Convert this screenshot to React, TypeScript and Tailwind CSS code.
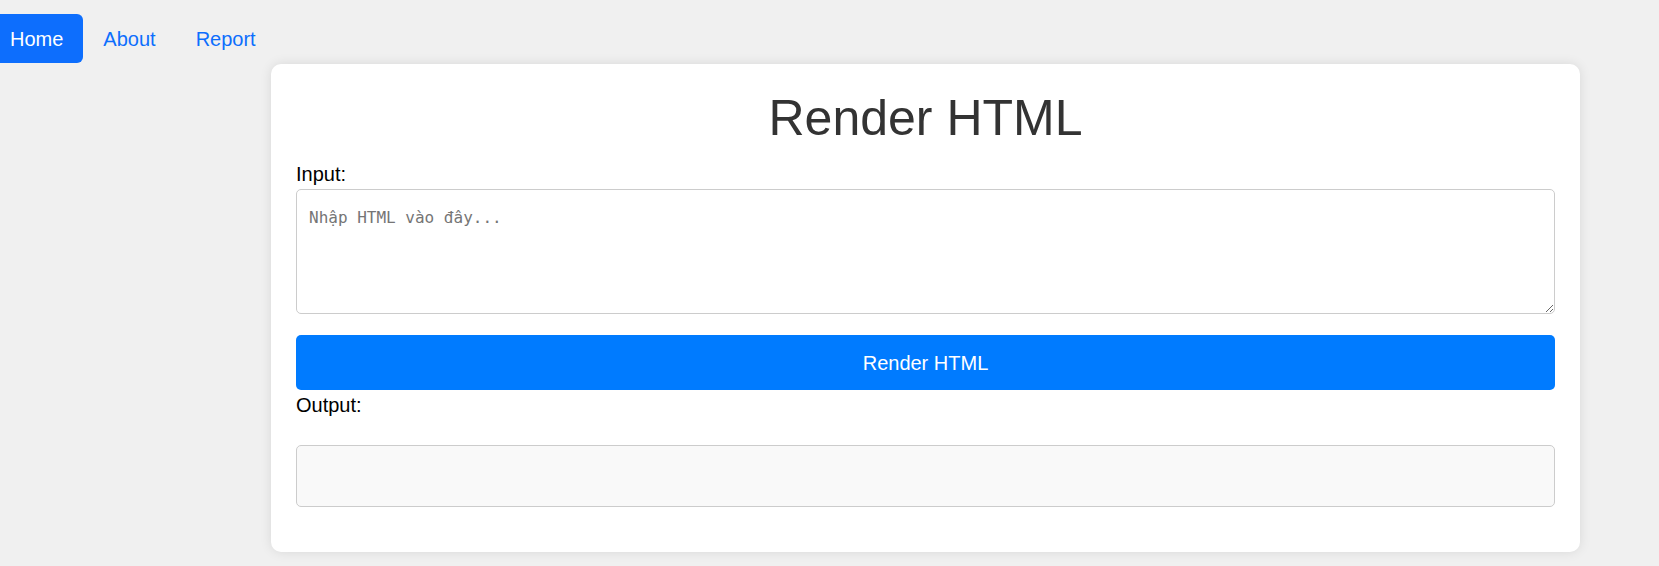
import { useState } from 'react';

export default function App() {
    const [html, setHtml] = useState('');
    const [output, setOutput] = useState('');

    return (
        <div className="min-h-[566px] bg-[#f0f0f0] pt-[14px] font-['Liberation_Sans',Arial,sans-serif]">
            <nav className="flex items-center -ml-[10px]">
                <a className="flex h-[49px] items-center rounded-[6px] bg-[#0d6efd] px-5 text-[20px] text-white">
                    Home
                </a>
                <a className="flex h-[49px] items-center px-5 text-[20px] text-[#0d6efd]">About</a>
                <a className="flex h-[49px] items-center px-5 text-[20px] text-[#0d6efd]">Report</a>
            </nav>

            <div className="ml-[271px] mt-[1px] w-[1309px] rounded-[10px] bg-white px-[25px] pt-[24px] pb-[45px] shadow-[0_0_12px_rgba(0,0,0,0.1)]">
                <h1 className="text-center text-[50px] leading-[60px] text-[#333]">Render HTML</h1>

                <label className="mt-[14px] block text-[20px] leading-[24px] text-black">Input:</label>
                <textarea
                    value={html}
                    onChange={(e) => setHtml(e.target.value)}
                    placeholder="Nhập HTML vào đây..."
                    className="mt-[3px] block h-[125px] w-full rounded-[5px] border border-[#ccc] px-[12px] pt-[16px] font-['DejaVu_Sans_Mono',monospace] text-[16px] outline-none placeholder:text-[#757575]"
                />

                <button
                    onClick={() => setOutput(html)}
                    className="mt-[21px] block h-[55px] w-full rounded-[5px] bg-[#007bff] text-[20px] text-white"
                >
                    Render HTML
                </button>

                <label className="mt-[3px] block text-[20px] leading-[24px] text-black">Output:</label>
                <div
                    className="mt-[28px] h-[62px] rounded-[5px] border border-[#ccc] bg-[#f9f9f9] px-[12px] py-[10px]"
                    dangerouslySetInnerHTML={{ __html: output }}
                />
            </div>
        </div>
    );
}
